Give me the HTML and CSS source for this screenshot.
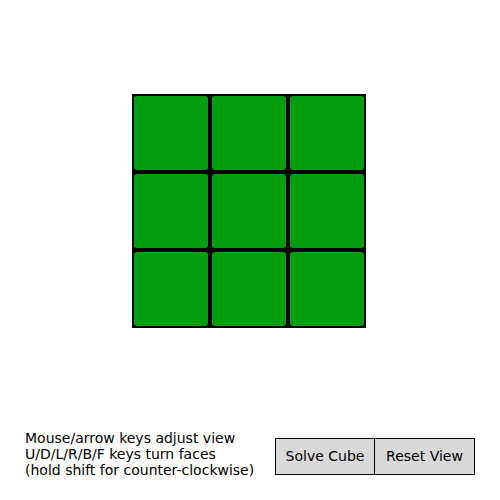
FILE: index.html
```html
<!DOCTYPE html>
<html>
<head>
<meta charset="utf-8">
<link rel="stylesheet" href="styles.css">
</head>
<body>
<div class="stage">
  <div class="cube">
    <div class="sticker"></div><div class="sticker"></div><div class="sticker"></div>
    <div class="sticker"></div><div class="sticker"></div><div class="sticker"></div>
    <div class="sticker"></div><div class="sticker"></div><div class="sticker"></div>
  </div>
</div>
<div class="footer">
  <div class="help">Mouse/arrow keys adjust view<br>U/D/L/R/B/F keys turn faces<br>(hold shift for counter-clockwise)</div>
  <div class="buttons">
    <button class="btn">Solve Cube</button><button class="btn btn-right">Reset View</button>
  </div>
</div>
</body>
</html>
```
FILE: styles.css
```css
html, body {
  margin: 0;
  padding: 0;
  background: #ffffff;
  font-family: "DejaVu Sans", sans-serif;
}
.stage {
  height: 430px;
  padding-top: 94px;
  box-sizing: border-box;
  display: flex;
  justify-content: flex-start;
  padding-left: 132px;
}
.cube {
  width: 234px;
  height: 234px;
  box-sizing: border-box;
  background: #000000;
  padding: 2px;
  display: grid;
  grid-template-columns: repeat(3, 74px);
  grid-template-rows: repeat(3, 74px);
  gap: 4px;
}
.sticker {
  background: #029e10;
  border-radius: 3px;
}
.footer {
  display: flex;
  justify-content: space-between;
  align-items: flex-start;
  padding: 0 25px;
}
.help {
  font-size: 14px;
  line-height: 16px;
  color: #000000;
}
.buttons {
  display: flex;
  margin-top: 8px;
}
.btn {
  width: 100px;
  height: 37px;
  background: #d9d9d9;
  border: 1px solid #000000;
  font-family: "DejaVu Sans", sans-serif;
  font-size: 14px;
  line-height: 16px;
  color: #000000;
  padding: 0 0 1px 0;
  margin: 0;
}
.btn-right {
  border-left: none;
  width: 100px;
}
```
